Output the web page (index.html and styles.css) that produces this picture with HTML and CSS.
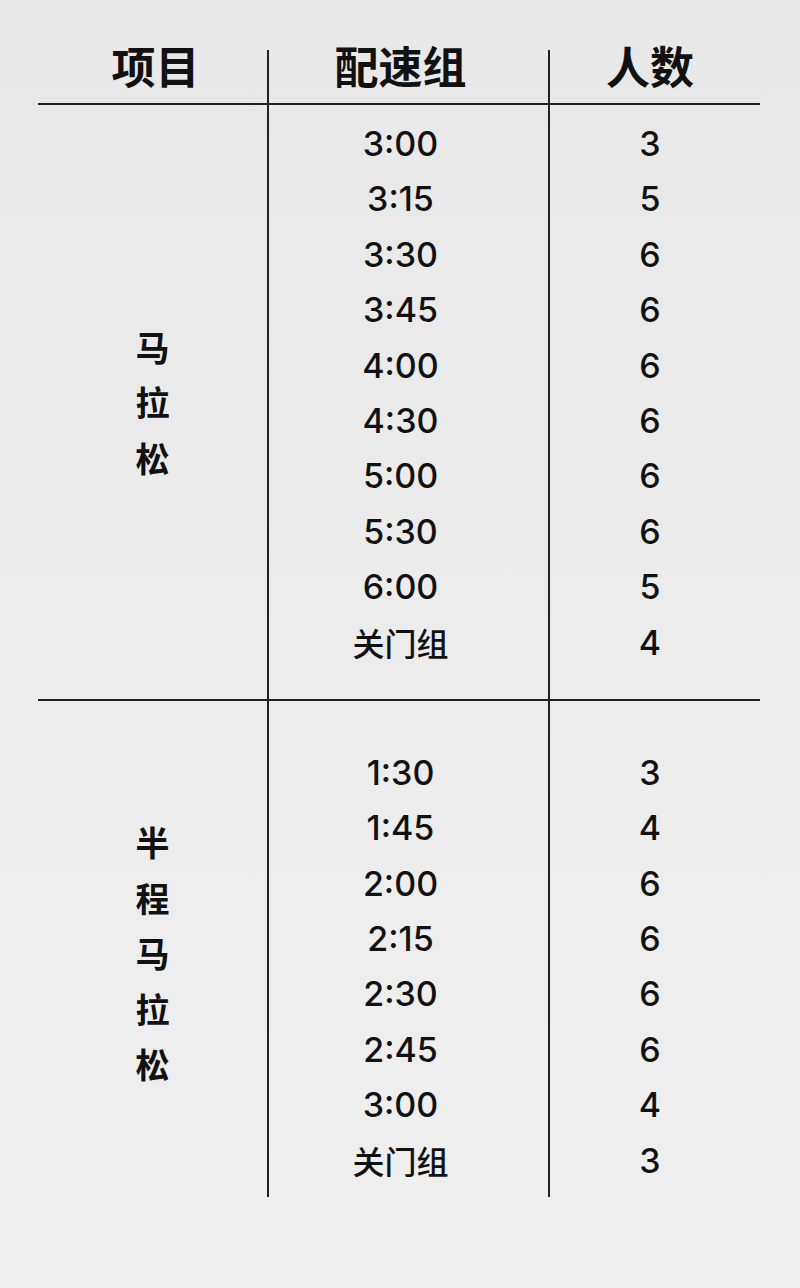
FILE: index.html
```html
<!DOCTYPE html>
<html lang="zh-CN">
<head>
<meta charset="utf-8">
<title>配速组</title>
<link rel="stylesheet" href="styles.css">
</head>
<body>
<div class="sheet">
  <div class="head">
    <div class="hcell c1 first">项目</div>
    <div class="hcell c2">配速组</div>
    <div class="hcell c3">人数</div>
  </div>

  <div class="section s1">
    <div class="label c1"><span>马</span><span>拉</span><span>松</span></div>
    <div class="list c2">
      <div class="row">3:00</div>
      <div class="row">3:15</div>
      <div class="row">3:30</div>
      <div class="row">3:45</div>
      <div class="row">4:00</div>
      <div class="row">4:30</div>
      <div class="row">5:00</div>
      <div class="row">5:30</div>
      <div class="row">6:00</div>
      <div class="row cjk">关门组</div>
    </div>
    <div class="list c3">
      <div class="row">3</div>
      <div class="row">5</div>
      <div class="row">6</div>
      <div class="row">6</div>
      <div class="row">6</div>
      <div class="row">6</div>
      <div class="row">6</div>
      <div class="row">6</div>
      <div class="row">5</div>
      <div class="row">4</div>
    </div>
  </div>

  <div class="section s2">
    <div class="label c1"><span>半</span><span>程</span><span>马</span><span>拉</span><span>松</span></div>
    <div class="list c2">
      <div class="row">1:30</div>
      <div class="row">1:45</div>
      <div class="row">2:00</div>
      <div class="row">2:15</div>
      <div class="row">2:30</div>
      <div class="row">2:45</div>
      <div class="row">3:00</div>
      <div class="row cjk">关门组</div>
    </div>
    <div class="list c3">
      <div class="row">3</div>
      <div class="row">4</div>
      <div class="row">6</div>
      <div class="row">6</div>
      <div class="row">6</div>
      <div class="row">6</div>
      <div class="row">4</div>
      <div class="row">3</div>
    </div>
  </div>
</div>
</body>
</html>
```

FILE: styles.css
```css
html, body {
  margin: 0;
  padding: 0;
}

body {
  width: 800px;
  height: 1288px;
  background: linear-gradient(180deg, #e8e8e8 0%, #ececec 50%, #efefef 100%);
  color: #111;
  font-family: "Inter", "Noto Sans CJK SC", sans-serif;
  overflow: hidden;
}

.sheet {
  margin-left: 38px;
  width: 722px;
  padding-top: 50px;
}

.head,
.section {
  display: grid;
  grid-template-columns: 229px 281px 212px;
}

.head {
  border-bottom: 2px solid #222;
}

.hcell {
  height: 53px;
  line-height: 30px;
  font-family: "Noto Sans CJK SC", sans-serif;
  font-weight: 700;
  font-size: 44px;
  text-align: center;
}

.hcell.first {
  padding-left: 6px;
}

.c2,
.c3 {
  border-left: 2px solid #222;
}

.c2 {
  padding-right: 16px;
}

.c3 {
  padding-right: 10px;
}

.s1 {
  border-bottom: 2px solid #222;
}

.s1 .list {
  padding-top: 11px;
  padding-bottom: 29px;
}

.s2 .list {
  padding-top: 44px;
  padding-bottom: 9px;
}

.label {
  display: flex;
  flex-direction: column;
  justify-content: center;
  align-items: center;
  font-family: "Noto Sans CJK SC", sans-serif;
  font-weight: 700;
  font-size: 34px;
  line-height: 55.5px;
}

.s2 .label {
  padding-top: 8px;
}

.list {
  text-align: center;
}

.row {
  height: 55.4px;
  line-height: 55.4px;
  font-size: 34px;
  font-weight: 500;
}

.row.cjk {
  font-family: "Noto Sans CJK SC", sans-serif;
  font-size: 32px;
}
```
